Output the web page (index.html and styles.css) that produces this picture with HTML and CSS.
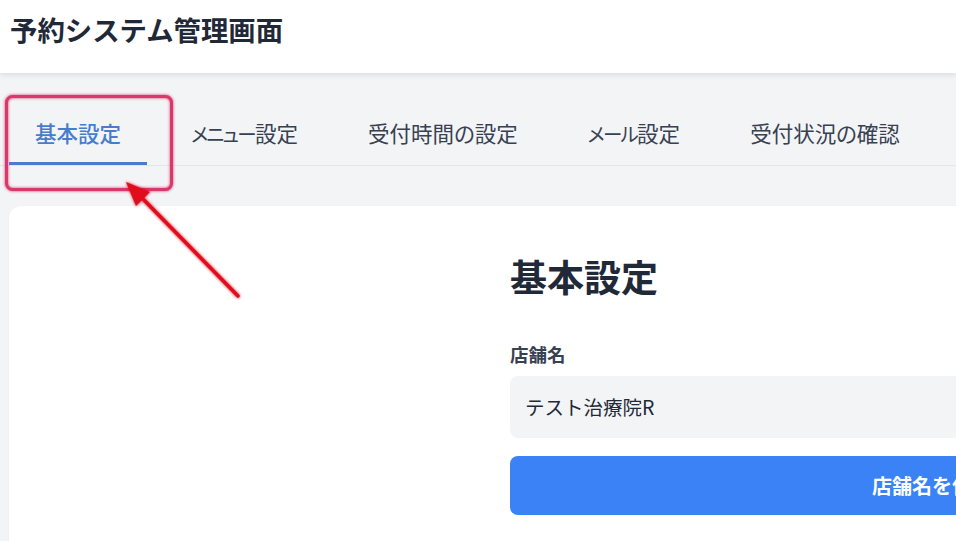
FILE: index.html
```html
<!DOCTYPE html>
<html lang="ja">
<head>
<meta charset="utf-8">
<title>予約システム管理画面</title>
<link rel="stylesheet" href="styles.css">
</head>
<body>
<header class="header">
  <h1 class="title">予約システム管理画面</h1>
</header>
<nav class="tabs">
  <a class="tab active">基本設定</a>
  <a class="tab"><span class="kana">メニュー</span>設定</a>
  <a class="tab">受付時間の設定</a>
  <a class="tab"><span class="kana">メール</span>設定</a>
  <a class="tab">受付状況の確認</a>
</nav>
<main class="card">
  <section class="panel">
    <h2 class="heading">基本設定</h2>
    <label class="label">店舗名</label>
    <div class="input">テスト治療院R</div>
    <button class="button">店舗名を保存</button>
  </section>
</main>
<svg class="annotation" width="956" height="541" viewBox="0 0 956 541">
  <defs>
    <filter id="glow" x="-20%" y="-20%" width="140%" height="140%">
      <feGaussianBlur stdDeviation="1.5" result="b"/>
      <feMerge><feMergeNode in="b"/><feMergeNode in="SourceGraphic"/></feMerge>
    </filter>
  </defs>
  <rect x="6.5" y="96.5" width="165" height="93" rx="6" fill="none" stroke="#d9386a" stroke-width="3" filter="url(#glow)"/>
  <g filter="url(#glow)">
    <line x1="238" y1="296" x2="143" y2="199" stroke="#e0101e" stroke-width="3.5" stroke-linecap="round"/>
    <polygon points="126,182 150,192 136,206" fill="#e0101e"/>
  </g>
</svg>
</body>
</html>
```
FILE: styles.css
```css
* { box-sizing: border-box; }
html, body { margin: 0; padding: 0; }
body {
  width: 956px;
  height: 541px;
  overflow: hidden;
  background: #f3f4f6;
  font-family: "Noto Sans CJK JP", "Noto Sans", sans-serif;
  color: #1f2937;
  position: relative;
}
.header {
  height: 73px;
  background: #fff;
  box-shadow: 0 2px 6px rgba(0,0,0,0.10);
  padding: 9px 0 0 10px;
  position: relative;
  z-index: 1;
}
.title {
  margin: 0;
  font-size: 27.4px;
  line-height: 40px;
  font-weight: 700;
  color: #1f2937;
}
.tabs {
  display: flex;
  gap: 18px;
  margin-top: 27px;
  padding-left: 9px;
  border-bottom: 1px solid #e3e5e9;
  height: 66px;
}
.tab {
  padding: 4px 26px 0;
  height: 65px;
  line-height: 58px;
  font-size: 21.5px;
  font-feature-settings: "palt";
  color: #374151;
  border-bottom: 3px solid transparent;
  white-space: nowrap;
}
.kana {
  font-size: 19.5px;
  letter-spacing: -1.7px;
}
.tab.active {
  color: #4a7ccc;
  font-weight: 500;
  border-bottom-color: #4a7ccc;
}
.card {
  display: flex;
  margin: 40px 0 0 9px;
  width: 1800px;
  height: 600px;
  background: #fff;
  border-radius: 12px;
  box-shadow: 0 1px 3px rgba(0,0,0,0.04);
}
.panel {
  display: flex;
  flex-direction: column;
  margin-left: 501px;
  width: 844px;
  padding-top: 46px;
}
.heading {
  margin: 0;
  font-size: 37px;
  line-height: 48px;
  font-weight: 700;
  color: #1f2937;
}
.label {
  margin-top: 40px;
  font-size: 18.5px;
  line-height: 28px;
  font-weight: 700;
  color: #374151;
}
.input {
  margin-top: 8px;
  height: 62px;
  padding: 0 15px;
  background: #f3f4f6;
  border-radius: 8px;
  font-size: 19.5px;
  line-height: 62px;
  color: #1f2937;
}
.button {
  margin-top: 18px;
  height: 59px;
  border: none;
  border-radius: 8px;
  background: #3b82f6;
  color: #fff;
  font-family: inherit;
  font-size: 20px;
  font-weight: 700;
}
.annotation {
  position: absolute;
  left: 0;
  top: 0;
  pointer-events: none;
  z-index: 2;
}
```
